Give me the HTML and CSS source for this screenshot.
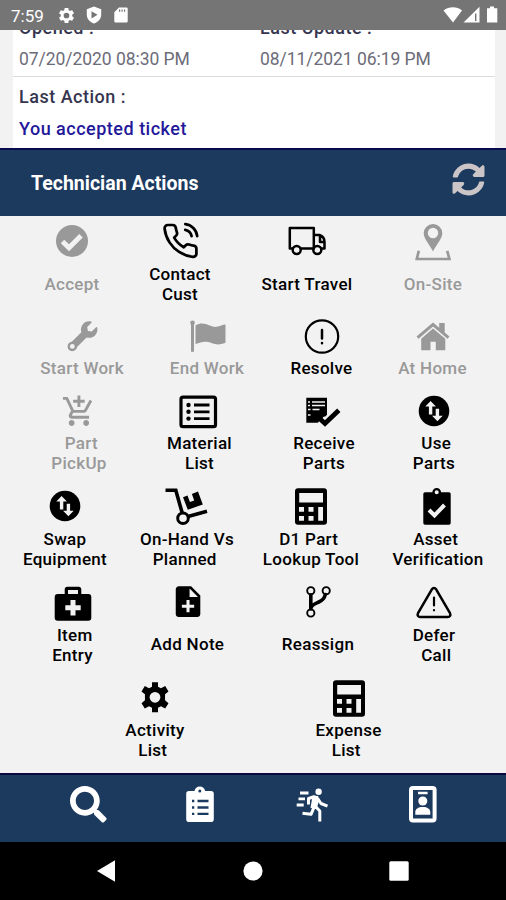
FILE: index.html
```html
<!DOCTYPE html>
<html lang="en">
<head>
    <meta charset="UTF-8">
    <meta name="viewport" content="width=device-width, initial-scale=1.0">
    <title>Technician Actions</title>
    <link rel="stylesheet" href="styles.css">
</head>
<body>
    <!-- Shared icons -->
    <svg class="sprite" width="0" height="0">
        <symbol id="calculator" viewBox="0 0 44 40">
            <path fill-rule="evenodd" d="M9 2.200h26a3 3 0 0 1 3 3v30.600a3 3 0 0 1-3 3H9a3 3 0 0 1-3-3V5.200a3 3 0 0 1 3-3zM10.200 7v9.500h23.800V7zM10 21v4.700h5V21zM19.500 21v4.700h5V21zM29.200 21v13.700h4.800V21zM10 30v4.700h5V30zM19.500 30v4.700h5V30z"/>
        </symbol>
        <symbol id="swap" viewBox="0 0 44 40">
            <circle cx="22" cy="20" r="15.300"/>
            <path fill="#f2f2f2" d="M18.600 10l5.300 5.600h-3.600v8h-3.400v-8h-3.600zM25.400 30.300l-5.300-5.600h3.600v-7h3.400v7h3.600z"/>
        </symbol>
    </svg>

    <!-- Status bar -->
    <div class="status-bar">
        <span class="clock">7:59</span>
        <svg class="status-gear" width="19" height="19" viewBox="0 0 24 24"><path d="M19.140 12.940c.04-.3.06-.61.06-.94 0-.32-.02-.64-.07-.94l2.030-1.580c.18-.14.23-.41.12-.61l-1.920-3.320c-.12-.22-.37-.29-.59-.22l-2.390.96c-.5-.38-1.030-.7-1.620-.94l-.36-2.540c-.04-.24-.24-.41-.48-.41h-3.840c-.24 0-.43.17-.47.41l-.36 2.540c-.59.24-1.130.57-1.620.94l-2.390-.96c-.22-.08-.47 0-.59.22L2.740 8.870c-.12.21-.08.47.12.61l2.030 1.580c-.05.3-.09.63-.09.94s.02.64.07.94l-2.030 1.580c-.18.14-.23.41-.12.61l1.920 3.320c.12.22.37.29.59.22l2.390-.96c.5.38 1.030.7 1.620.94l.36 2.540c.05.24.24.41.48.41h3.840c.24 0 .44-.17.47-.41l.36-2.540c.59-.24 1.130-.56 1.620-.94l2.390.96c.22.08.47 0 .59-.22l1.920-3.320c.12-.22.07-.47-.12-.61zM12 15.600a3.600 3.600 0 1 1 0-7.200 3.600 3.600 0 0 1 0 7.200z"/></svg>
        <svg class="status-shield" width="16" height="18" viewBox="0 0 16 18"><path fill-rule="evenodd" d="M8 .5l7.200 2.800v5.400c0 4-3 7.300-7.200 8.800C3.800 16 .8 12.700.8 8.700V3.300zM5.500 5.200v7.200l6-3.600z"/></svg>
        <svg class="status-card" width="14" height="16" viewBox="0 0 14 16"><path fill-rule="evenodd" d="M5 .5h7.500a1.200 1.200 0 0 1 1.200 1.200v12.600a1.200 1.200 0 0 1-1.200 1.200h-11A1.200 1.200 0 0 1 .3 14.300V5.200zM5 2.500v2.300h1.200V2.500zM7.500 2.500v2.300h1.200V2.500zM10 2.500v2.300h1.200V2.500z"/></svg>
        <svg class="status-right" width="56" height="18" viewBox="0 0 56 18">
            <path d="M10 16.500L.5 4.500C6 .3 14 .3 19 4.500z"/>
            <path fill-rule="evenodd" d="M20.500 16.500L36.500.8v15.700zM32 7.500v7.500h1.400V7.500z"/>
            <path d="M47 .5h4v1.700h3.300v14.300H44V2.200h3z"/>
        </svg>
    </div>

    <!-- Ticket details -->
    <div class="ticket">
        <div class="dates">
            <div class="date">
                <div class="field-label">Opened :</div>
                <div class="field-value">07/20/2020 08:30 PM</div>
            </div>
            <div class="date">
                <div class="field-label">Last Update :</div>
                <div class="field-value">08/11/2021 06:19 PM</div>
            </div>
        </div>
        <div class="last-action">
            <div class="field-label">Last Action :</div>
            <div class="ticket-state">You accepted ticket</div>
        </div>
    </div>

    <!-- Section header -->
    <div class="section-header">
        <h1>Technician Actions</h1>
        <svg class="refresh" width="33" height="33" viewBox="0 0 512 512"><path d="M370.720 133.280C339.458 104.008 298.888 87.962 255.848 88c-77.458.068-144.328 53.178-162.791 126.850-1.344 5.363-6.122 9.150-11.651 9.150H24.103c-7.498 0-13.194-6.807-11.807-14.176C33.933 94.924 134.813 8 256 8c66.448 0 126.791 26.136 171.315 68.685L463.030 40.970C478.149 25.851 504 36.559 504 57.941V192c0 13.255-10.745 24-24 24H345.941c-21.382 0-32.090-25.851-16.971-40.971zM32 296h134.059c21.382 0 32.090 25.851 16.971 40.971l-41.750 41.750c31.262 29.273 71.835 45.319 114.876 45.280 77.418-.07 144.315-53.144 162.787-126.849 1.344-5.363 6.122-9.150 11.651-9.150h57.304c7.498 0 13.194 6.807 11.807 14.176C478.067 417.076 377.187 504 256 504c-66.448 0-126.791-26.136-171.315-68.685L48.970 471.030C33.851 486.149 8 475.441 8 454.059V320c0-13.255 10.745-24 24-24z"/></svg>
    </div>

    <!-- Actions -->
    <div class="actions">
        <div class="row row-1">
            <div class="action disabled single">
                <svg class="icon" viewBox="0 0 44 40"><circle cx="22" cy="20" r="16"/><path class="bg-line" stroke-width="5" d="M12.500 20.500l6.500 6.300 12-12"/></svg>
                <span>Accept</span>
            </div>
            <div class="action">
                <svg class="icon line" viewBox="0 0 44 40"><path stroke-width="1.700" transform="translate(3.200 .8) scale(1.600)" d="M15.050 5A5 5 0 0 1 19 8.950M15.050 1.500A8.500 8.500 0 0 1 22.500 8.940m-.5 7.980v3a2 2 0 0 1-2.180 2 19.790 19.790 0 0 1-8.630-3.070 19.500 19.500 0 0 1-6-6 19.790 19.790 0 0 1-3.070-8.670A2 2 0 0 1 4.110 2h3a2 2 0 0 1 2 1.720 12.840 12.840 0 0 0 .7 2.810 2 2 0 0 1-.45 2.110L8.090 9.910a16 16 0 0 0 6 6l1.270-1.270a2 2 0 0 1 2.110-.45 12.840 12.840 0 0 0 2.810.7A2 2 0 0 1 22 16.920z"/></svg>
                <span>Contact<br>Cust</span>
            </div>
            <div class="action single">
                <svg class="icon line" viewBox="0 0 44 40"><path stroke-width="2.500" d="M7.500 27.500H4.800V7h24v20.500H16M29 14h5.500c3 1 5 4 5 7v6.500h-3M29 27.500h-1M35 15v6h4"/><circle cx="11.700" cy="29" r="4" stroke-width="2.500"/><circle cx="32.300" cy="29" r="4" stroke-width="2.500"/></svg>
                <span>Start Travel</span>
            </div>
            <div class="action disabled single">
                <svg class="icon" viewBox="0 0 44 40"><path fill-rule="evenodd" d="M22 3a9.300 9.300 0 0 1 9.300 9.300C31.300 18 25 24 22 30.500 19 24 12.700 18 12.700 12.300A9.300 9.300 0 0 1 22 3zm0 3.800a5.200 5.200 0 1 0 0 10.400 5.200 5.200 0 0 0 0-10.400z"/><path fill="none" stroke="currentColor" stroke-width="2.700" d="M7.800 29.800L5.800 38h32.600l-2.200-8.200"/></svg>
                <span>On-Site</span>
            </div>
        </div>

        <div class="row row-2">
            <div class="action disabled">
                <svg class="icon" viewBox="0 0 44 40"><g transform="translate(8 5.300) scale(.0575)"><path fill-rule="evenodd" d="M507.730 109.100c-2.240-9.030-13.540-12.090-20.120-5.510l-74.360 74.360-67.880-11.310-11.310-67.880 74.360-74.360c6.620-6.620 3.430-17.900-5.660-20.160-47.380-11.740-99.550.91-136.580 37.930-39.640 39.640-50.550 97.100-34.050 147.200L18.740 402.760c-24.990 24.990-24.990 65.510 0 90.500 24.990 24.990 65.510 24.990 90.500 0l213.210-213.210c50.120 16.710 107.470 5.680 147.370-34.220 37.070-37.070 49.700-89.320 37.910-136.730z"/><circle cx="75" cy="437" r="82"/><circle cx="75" cy="437" r="42" fill="#f2f2f2"/></g></svg>
                <span>Start Work</span>
            </div>
            <div class="action disabled">
                <svg class="icon flag" viewBox="0 0 44 40"><circle cx="6.500" cy="6.800" r="2.300"/><path d="M5 7h3v28.800H5zM9.500 9.500c9-5.500 15 2.500 21 1.300 4-.8 6-2 9-2.300v18.300c-10 4-13-.5-19-1-4-.3-7 1-11 2.200z"/></svg>
                <span>End Work</span>
            </div>
            <div class="action">
                <svg class="icon line" viewBox="0 0 44 40"><circle cx="22" cy="20.500" r="16.200" stroke-width="2.200"/><path stroke-width="2.500" d="M22 14v8.500M22 27v.3"/></svg>
                <span>Resolve</span>
            </div>
            <div class="action disabled">
                <svg class="icon" viewBox="0 0 44 40"><path d="M22 12.500l12.300 10.300v11.400h-9.500v-8.500h-5.300v8.500h-9.300V22.800z"/><path d="M22 6.500l6.200 5.200V6.900h5.500v9.500l4.800 4.100-2 2.300L22 10.500 7.500 22.800l-2-2.300z"/></svg>
                <span>At Home</span>
            </div>
        </div>

        <div class="row row-3">
            <div class="action disabled">
                <svg class="icon cart" viewBox="0 0 44 40"><path transform="translate(5.500 3) scale(1.450)" d="M11 9h2V6h3V4h-3V1h-2v3H8v2h3v3zm-4 9c-1.100 0-1.990.9-1.990 2S5.900 22 7 22s2-.9 2-2-.9-2-2-2zm10 0c-1.100 0-1.990.9-1.990 2s.89 2 1.990 2 2-.9 2-2-.9-2-2-2zm-9.830-3.250l.03-.12.9-1.630h7.450c.75 0 1.410-.41 1.750-1.030l3.860-7.010L19.420 4h-.01l-1.100 2-2.760 5H8.530l-.13-.27L6.160 6l-.95-2-.94-2H1v2h2l3.600 7.590-1.350 2.450c-.16.28-.25.61-.25.96 0 1.100.9 2 2 2h12v-2H7.420c-.13 0-.25-.11-.25-.25z"/></svg>
                <span>&nbsp;Part<br>PickUp</span>
            </div>
            <div class="action">
                <svg class="icon material" viewBox="0 0 44 40"><rect x="5" y="6.200" width="34.500" height="29.500" rx="2" fill="none" stroke="currentColor" stroke-width="3.200"/><path d="M18 12.600h15.500v2.800H18zM18 19.400h15.500v2.800H18zM18 26.200h15.500V29H18z"/><circle cx="12.500" cy="14" r="2.200"/><circle cx="12.500" cy="20.800" r="2.200"/><circle cx="12.500" cy="27.600" r="2.200"/></svg>
                <span>Material<br>List</span>
            </div>
            <div class="action">
                <svg class="icon receive" viewBox="0 0 44 40"><path d="M5.300 6.700H26v17l-8 8H5.300z"/><path stroke="#f2f2f2" stroke-width="1.500" d="M11 11h13M7 11h2M11 14.500h13M7 14.500h2M7 18.500h2.500M11.500 18.500h7M7 24h2.500"/><path class="bg-line" stroke-width="9" d="M20 28.500l4.500 4.500 10-10"/><path fill="none" stroke="currentColor" stroke-width="4.800" d="M17.500 26.500l6.500 6 13.800-13.200"/></svg>
                <span>Receive<br>Parts</span>
            </div>
            <div class="action">
                <svg class="icon use-parts"><use href="#swap"/></svg>
                <span>&nbsp;Use<br>Parts</span>
            </div>
        </div>

        <div class="row row-4">
            <div class="action">
                <svg class="icon"><use href="#swap"/></svg>
                <span>Swap<br>Equipment</span>
            </div>
            <div class="action">
                <svg class="icon dolly" viewBox="0 0 44 40"><path fill="none" stroke="currentColor" stroke-width="3.600" d="M1.500 4.300h10.300l6.500 23M24 30.500l19-5.300"/><circle cx="19" cy="32.200" r="5.300" fill="none" stroke="currentColor" stroke-width="3"/><path d="M19 11.200l4.500-1.700 2.400 6.600 4.300-1.500-2.300-6.700L34 5.500l4.800 13-15 5.300z"/></svg>
                <span>On-Hand Vs<br>Planned&nbsp;</span>
            </div>
            <div class="action">
                <svg class="icon"><use href="#calculator"/></svg>
                <span>D1 Part&nbsp;<br>Lookup Tool</span>
            </div>
            <div class="action">
                <svg class="icon asset" viewBox="0 0 44 40"><path d="M10 6.300h24a1.700 1.700 0 0 1 1.700 1.700v29a1.700 1.700 0 0 1-1.700 1.700H10A1.700 1.700 0 0 1 8.300 37V8A1.700 1.700 0 0 1 10 6.300z"/><circle cx="21.700" cy="6.300" r="3.200" fill="#f2f2f2" stroke="currentColor" stroke-width="2.300"/><path class="bg-line" stroke-width="4" d="M14 24l5.500 5.500 10-10.500"/></svg>
                <span>Asset&nbsp;<br>Verification</span>
            </div>
        </div>

        <div class="row row-5">
            <div class="action">
                <svg class="icon" viewBox="0 0 44 40"><path fill-rule="evenodd" d="M13.700 11V6.500c0-1.700 1-2.700 2.700-2.700h11.200c1.700 0 2.700 1 2.700 2.700V11h7a3 3 0 0 1 3 3v20.700a3 3 0 0 1-3 3H6.700a3 3 0 0 1-3-3V14a3 3 0 0 1 3-3zM17 7v4h10V7zM19.500 17v5.200h-5.200v5h5.200v5.200h5v-5.200h5.200v-5h-5.200V17z"/></svg>
                <span>&nbsp;Item<br>Entry</span>
            </div>
            <div class="action single">
                <svg class="icon" viewBox="0 0 44 40"><path transform="translate(3.600 .2) scale(1.535)" d="M14 2H6c-1.100 0-1.990.9-1.990 2L4 20c0 1.100.89 2 1.990 2H18c1.100 0 2-.9 2-2V8l-6-6zm2 14h-3v3h-2v-3H8v-2h3v-3h2v3h3v2zm-3-7V3.500L18.500 9H13z"/></svg>
                <span>Add Note</span>
            </div>
            <div class="action single">
                <svg class="icon line" viewBox="0 0 44 40"><path stroke-width="3.600" d="M14.800 12v14M29.300 11.500c-.8 4-3 6-6.500 7.500s-7 2.500-8 6"/><g stroke-width="1.900"><circle cx="14.800" cy="7.700" r="3.600"/><circle cx="30.200" cy="7.700" r="3.600"/><circle cx="14.800" cy="30" r="3.600"/></g></svg>
                <span>Reassign</span>
            </div>
            <div class="action">
                <svg class="icon line defer" viewBox="0 0 44 40"><path stroke-width="2.500" d="M20 6.200L6 30.200c-1 2 .2 3.700 2.200 3.700h27.600c2 0 3.200-1.700 2.200-3.700L24 6.200c-1-1.600-3-1.600-4 0z"/><path stroke-width="2.200" d="M22 14.500v8M22 27v.3"/></svg>
                <span>Defer<br>&nbsp;Call</span>
            </div>
        </div>

        <div class="row row-6">
            <div class="action">
                <svg class="icon" viewBox="0 0 44 40"><path transform="translate(4 1.300) scale(1.500)" d="M10 2h4v3l2 1 2.800-1.500 2.200 3.600-2.300 1.900v4l2.300 1.900-2.200 3.600L16 18l-2 1v3h-4v-3l-2-1-2.800 1.500L3 15.900 5.300 14v-4L3 8.100l2.200-3.600L8 6l2-1zm2 6.400a3.600 3.600 0 1 0 0 7.200 3.600 3.600 0 0 0 0-7.200z"/></svg>
                <span>Activity<br>List&nbsp;</span>
            </div>
            <div class="action">
                <svg class="icon"><use href="#calculator"/></svg>
                <span>Expense<br>List&nbsp;</span>
            </div>
        </div>
    </div>

    <!-- Bottom tabs -->
    <div class="tabs">
        <svg class="tab" viewBox="0 0 44 40"><path transform="translate(4 1) scale(.0715)" d="M505 442.700L405.300 343c-4.500-4.500-10.600-7-17-7H372c27.600-35.300 44-79.700 44-128C416 93.100 322.900 0 208 0S0 93.100 0 208s93.100 208 208 208c48.300 0 92.700-16.400 128-44v16.300c0 6.400 2.500 12.500 7 17l99.700 99.700c9.400 9.400 24.600 9.400 33.900 0l28.300-28.300c9.400-9.400 9.400-24.600.1-34zM208 336c-70.700 0-128-57.200-128-128 0-70.700 57.200-128 128-128 70.700 0 128 57.200 128 128 0 70.700-57.200 128-128 128z"/></svg>
        <svg class="tab" viewBox="0 0 44 40"><path d="M11 6h5.500c.5-3 2.500-4.500 5.300-4.500s4.800 1.500 5.300 4.500H33a2.800 2.800 0 0 1 2.800 2.800v25.500A2.800 2.800 0 0 1 33 37.100H11a2.800 2.800 0 0 1-2.800-2.800V8.800A2.800 2.800 0 0 1 11 6z"/><path stroke="#1c3a5e" stroke-width="2.300" d="M14 16h2.300M19.500 16h11M14 22.500h2.300M19.500 22.500h11M14 28.800h2.300M19.500 28.800h11"/><circle cx="21.800" cy="6" r="1.500" fill="#1c3a5e"/></svg>
        <svg class="tab" viewBox="0 0 44 40"><circle cx="28.600" cy="6.700" r="3.200"/><path fill="none" stroke="#fff" stroke-width="2.800" d="M10 8h8.500M8.500 13.800H15M6.700 20h7"/><path fill="none" stroke="#fff" stroke-width="3" stroke-linejoin="round" d="M18.500 19.500v-6l5.500-1.800 3 1.500M28 14l3 4.500 6.500 2.700M26 22l3.800 4v10.500M12.500 28.300l8.500 1 3-7"/><path d="M22.500 11h5.500l1.500 3.500-3 9.500-6-1z"/></svg>
        <svg class="tab" viewBox="0 0 44 40"><rect x="10" y="3" width="23.600" height="32.400" rx="2" fill="none" stroke="#fff" stroke-width="4"/><circle cx="21.800" cy="16" r="4.500"/><path d="M17 6.700h9.600v2.500H17zM14.300 29.700V27c0-3 3-5 7.500-5s7.500 2 7.500 5v2.700z"/></svg>
    </div>

    <!-- System navigation -->
    <div class="system-nav">
        <svg width="20" height="24" viewBox="0 0 20 24"><path d="M1 12L19 1.200v21.600z"/></svg>
        <svg width="20" height="20" viewBox="0 0 20 20"><circle cx="10" cy="10" r="9.600"/></svg>
        <svg width="20" height="20" viewBox="0 0 20 20"><rect x=".3" y=".3" width="19.400" height="19.400" rx="1.500"/></svg>
    </div>
</body>
</html>
```

FILE: styles.css
```css
* {
    box-sizing: border-box;
}

body {
    margin: 0;
    width: 506px;
    height: 900px;
    overflow: hidden;
    display: flex;
    flex-direction: column;
    background-color: #f2f2f2;
    font-family: Roboto, sans-serif;
    color: #000;
}

svg {
    display: block;
    flex: none;
}

.sprite {
    display: none;
}

/* Status bar */
.status-bar {
    height: 30px;
    flex: none;
    display: flex;
    align-items: center;
    padding: 0 7px 0 11px;
    background-color: #757575;
    color: #fff;
    fill: #fff;
}

.clock {
    width: 33px;
    font-size: 17px;
    padding-top: 2px;
}

.status-gear {
    margin-left: 13px;
}

.status-shield {
    margin-left: 10px;
}

.status-card {
    margin-left: 12px;
}

.status-right {
    margin-left: auto;
}

/* Ticket details */
.ticket {
    height: 118px;
    flex: none;
    margin: 0 11px 0 13px;
    background-color: #fff;
    overflow: hidden;
}

.dates {
    display: flex;
    height: 47px;
    align-items: flex-end;
    padding: 0 6px 4px;
    border-bottom: 1px solid #dcdcdc;
}

.date {
    width: 241px;
    flex: none;
}

.field-label {
    font-size: 18px;
    line-height: 26px;
    font-weight: 500;
    letter-spacing: 0.5px;
    color: #35354f;
}

.field-value {
    font-size: 17.5px;
    line-height: 26px;
    letter-spacing: -0.05px;
    color: #6c6c78;
}

.dates .field-label {
    margin-bottom: 5px;
}

.last-action {
    padding: 7px 6px 0;
}

.ticket-state {
    margin-top: 6px;
    font-size: 18px;
    line-height: 26px;
    font-weight: 500;
    letter-spacing: 0.5px;
    color: #24189a;
}

/* Section header */
.section-header {
    height: 68px;
    flex: none;
    display: flex;
    align-items: center;
    justify-content: space-between;
    padding: 0 21px 0 31px;
    background-color: #1c3a5e;
    border-top: 2px solid #0a0a50;
}

.section-header h1 {
    margin: 0;
    font-size: 19.5px;
    font-weight: 700;
    color: #fff;
}

.refresh {
    fill: #ccc5c7;
    margin-bottom: 8px;
}

/* Actions */
.actions {
    height: 557px;
    flex: none;
    padding-top: 5px;
}

.row {
    display: grid;
}

.row-1 {
    height: 95px;
    padding-left: 17px;
    grid-template-columns: 110px 106px 148px 104px;
}

.row-2 {
    height: 75px;
    padding-left: 22px;
    grid-template-columns: 120px 130px 99px 123px;
}

.row-3 {
    height: 95px;
    padding-left: 19px;
    grid-template-columns: 120px 121px 128px 92px;
}

.row-4 {
    height: 97px;
    padding-left: 5px;
    grid-template-columns: 120px 124px 124px 130px;
}

.row-5 {
    height: 95px;
    padding-left: 17.5px;
    grid-template-columns: 110px 120px 141px 91px;
}

.row-6 {
    padding-left: 95px;
    grid-template-columns: 120px 267px;
}

.action {
    display: flex;
    flex-direction: column;
    align-items: center;
    text-align: center;
    white-space: nowrap;
    font-size: 17px;
    line-height: 20px;
    font-weight: 500;
    letter-spacing: 0.3px;
}

.action span {
    margin-top: 3px;
}

.action.single span {
    margin-top: 13px;
}

.row-2 .action span,
.row-3 .action span,
.row-5 .action span,
.row-6 .action span {
    margin-top: 2px;
}

.row-5 .action.single span {
    margin-top: 11px;
}

.disabled {
    color: #999;
}

.icon {
    width: 44px;
    height: 40px;
    overflow: visible;
    fill: currentColor;
}

.icon.line {
    fill: none;
    stroke: currentColor;
    stroke-linecap: round;
    stroke-linejoin: round;
}

.bg-line {
    fill: none;
    stroke: #f2f2f2;
}

.icon.flag {
    margin-left: 2px;
}

.icon.cart,
.icon.material,
.icon.receive {
    margin-right: 3px;
}

.icon.use-parts,
.icon.defer {
    margin-right: 1px;
}

.icon.dolly,
.icon.asset {
    margin-right: 2px;
}

/* Bottom tabs */
.tabs {
    height: 69px;
    flex: none;
    display: grid;
    grid-template-columns: 112px 112px 111px 111px;
    justify-items: center;
    padding: 10px 0 0 32px;
    background-color: #1c3a5e;
    border-top: 2px solid #0a0a40;
    fill: #fff;
}

.tab {
    width: 44px;
    height: 40px;
}

/* System navigation */
.system-nav {
    flex: 1;
    display: flex;
    align-items: center;
    justify-content: space-between;
    padding: 0 97px 0 96px;
    background-color: #000;
    fill: #fff;
}
```
